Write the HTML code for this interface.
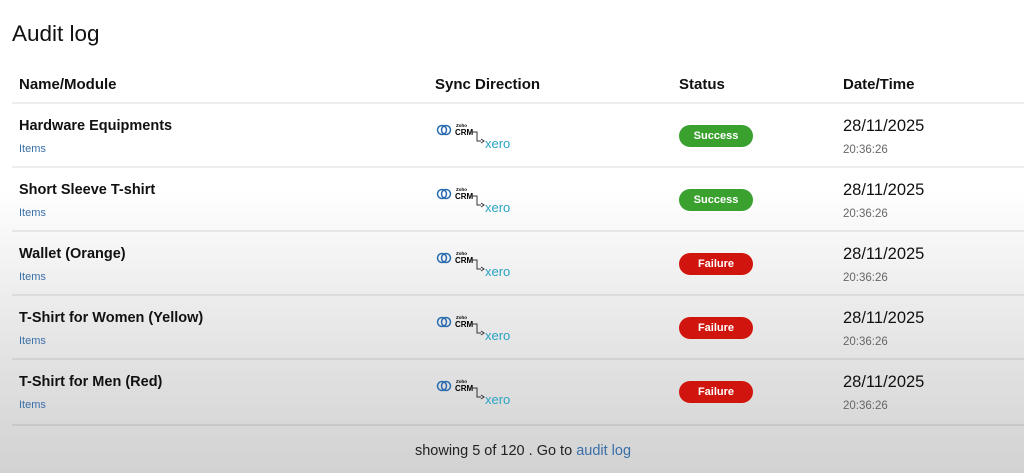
<html><head><style>
body{margin:0;width:1024px;height:473px;overflow:hidden;font-family:"Liberation Sans",sans-serif;background:linear-gradient(180deg,#fff 0px,#fff 190px,#ececec 300px,#dcdcdc 400px,#d2d2d2 473px);position:relative;color:#111}
.t{position:absolute;left:12px;top:21px;font-size:22.5px}
.h{position:absolute;top:76px;font-size:15px;font-weight:bold}
.row{position:absolute;left:12px;width:1012px;height:64px;border-top:2px solid rgba(0,0,0,0.07)}
.n{position:absolute;left:7px;top:14px;font-size:14.5px;font-weight:bold}
.i{position:absolute;left:7px;top:39px;font-size:11px;color:#3a6fa8}
.d{position:absolute;left:831px;top:13px;font-size:16.5px}
.tm{position:absolute;left:831px;top:40px;font-size:11.5px;color:#666}
.b{position:absolute;left:667px;top:21px;width:74px;height:22px;border-radius:11px;color:#fff;font-size:11px;font-weight:bold;text-align:center;line-height:22px}
.s{background:#3aa12f}.f{background:#d0150e}
.lg{position:absolute;left:418px;top:16px;width:100px;height:32px}
</style></head><body>
<div class="t">Audit log</div>
<div class="h" style="left:19px">Name/Module</div>
<div class="h" style="left:435px">Sync Direction</div>
<div class="h" style="left:679px">Status</div>
<div class="h" style="left:843px">Date/Time</div>

<div class="row" style="top:102px"><div class="n">Hardware Equipments</div><div class="i">Items</div><svg class="lg"><circle cx="12" cy="10" r="4.5" fill="none" stroke="#2b6cb0" stroke-width="1.5"/><circle cx="16" cy="10" r="4.5" fill="none" stroke="#2b6cb0" stroke-width="1.5"/><text x="26" y="7" font-size="4.5" font-weight="bold" font-family="Liberation Sans">Zoho</text><text x="25" y="15" font-size="8" font-weight="bold" font-family="Liberation Sans">CRM</text><path d="M41 12h6v9h4" fill="none" stroke="#333" stroke-width="1"/><path d="M51 19l3 2-3 2" fill="none" stroke="#333"/><text x="55" y="28" font-size="13" fill="#29a3c4" font-family="Liberation Sans">xero</text></svg><div class="b s">Success</div><div class="d">28/11/2025</div><div class="tm">20:36:26</div></div>

<div class="row" style="top:166px"><div class="n">Short Sleeve T-shirt</div><div class="i">Items</div><svg class="lg"><circle cx="12" cy="10" r="4.5" fill="none" stroke="#2b6cb0" stroke-width="1.5"/><circle cx="16" cy="10" r="4.5" fill="none" stroke="#2b6cb0" stroke-width="1.5"/><text x="26" y="7" font-size="4.5" font-weight="bold" font-family="Liberation Sans">Zoho</text><text x="25" y="15" font-size="8" font-weight="bold" font-family="Liberation Sans">CRM</text><path d="M41 12h6v9h4" fill="none" stroke="#333" stroke-width="1"/><path d="M51 19l3 2-3 2" fill="none" stroke="#333"/><text x="55" y="28" font-size="13" fill="#29a3c4" font-family="Liberation Sans">xero</text></svg><div class="b s">Success</div><div class="d">28/11/2025</div><div class="tm">20:36:26</div></div>

<div class="row" style="top:230px"><div class="n">Wallet (Orange)</div><div class="i">Items</div><svg class="lg"><circle cx="12" cy="10" r="4.5" fill="none" stroke="#2b6cb0" stroke-width="1.5"/><circle cx="16" cy="10" r="4.5" fill="none" stroke="#2b6cb0" stroke-width="1.5"/><text x="26" y="7" font-size="4.5" font-weight="bold" font-family="Liberation Sans">Zoho</text><text x="25" y="15" font-size="8" font-weight="bold" font-family="Liberation Sans">CRM</text><path d="M41 12h6v9h4" fill="none" stroke="#333" stroke-width="1"/><path d="M51 19l3 2-3 2" fill="none" stroke="#333"/><text x="55" y="28" font-size="13" fill="#29a3c4" font-family="Liberation Sans">xero</text></svg><div class="b f">Failure</div><div class="d">28/11/2025</div><div class="tm">20:36:26</div></div>

<div class="row" style="top:294px"><div class="n">T-Shirt for Women (Yellow)</div><div class="i">Items</div><svg class="lg"><circle cx="12" cy="10" r="4.5" fill="none" stroke="#2b6cb0" stroke-width="1.5"/><circle cx="16" cy="10" r="4.5" fill="none" stroke="#2b6cb0" stroke-width="1.5"/><text x="26" y="7" font-size="4.5" font-weight="bold" font-family="Liberation Sans">Zoho</text><text x="25" y="15" font-size="8" font-weight="bold" font-family="Liberation Sans">CRM</text><path d="M41 12h6v9h4" fill="none" stroke="#333" stroke-width="1"/><path d="M51 19l3 2-3 2" fill="none" stroke="#333"/><text x="55" y="28" font-size="13" fill="#29a3c4" font-family="Liberation Sans">xero</text></svg><div class="b f">Failure</div><div class="d">28/11/2025</div><div class="tm">20:36:26</div></div>

<div class="row" style="top:358px;border-bottom:2px solid rgba(0,0,0,0.07)"><div class="n">T-Shirt for Men (Red)</div><div class="i">Items</div><svg class="lg"><circle cx="12" cy="10" r="4.5" fill="none" stroke="#2b6cb0" stroke-width="1.5"/><circle cx="16" cy="10" r="4.5" fill="none" stroke="#2b6cb0" stroke-width="1.5"/><text x="26" y="7" font-size="4.5" font-weight="bold" font-family="Liberation Sans">Zoho</text><text x="25" y="15" font-size="8" font-weight="bold" font-family="Liberation Sans">CRM</text><path d="M41 12h6v9h4" fill="none" stroke="#333" stroke-width="1"/><path d="M51 19l3 2-3 2" fill="none" stroke="#333"/><text x="55" y="28" font-size="13" fill="#29a3c4" font-family="Liberation Sans">xero</text></svg><div class="b f">Failure</div><div class="d">28/11/2025</div><div class="tm">20:36:26</div></div>

<div style="position:absolute;left:0;width:1046px;top:443px;text-align:center;font-size:14.5px;color:#222">showing 5 of 120 . Go to <span style="color:#3a6fa8">audit log</span></div>
</body></html>
